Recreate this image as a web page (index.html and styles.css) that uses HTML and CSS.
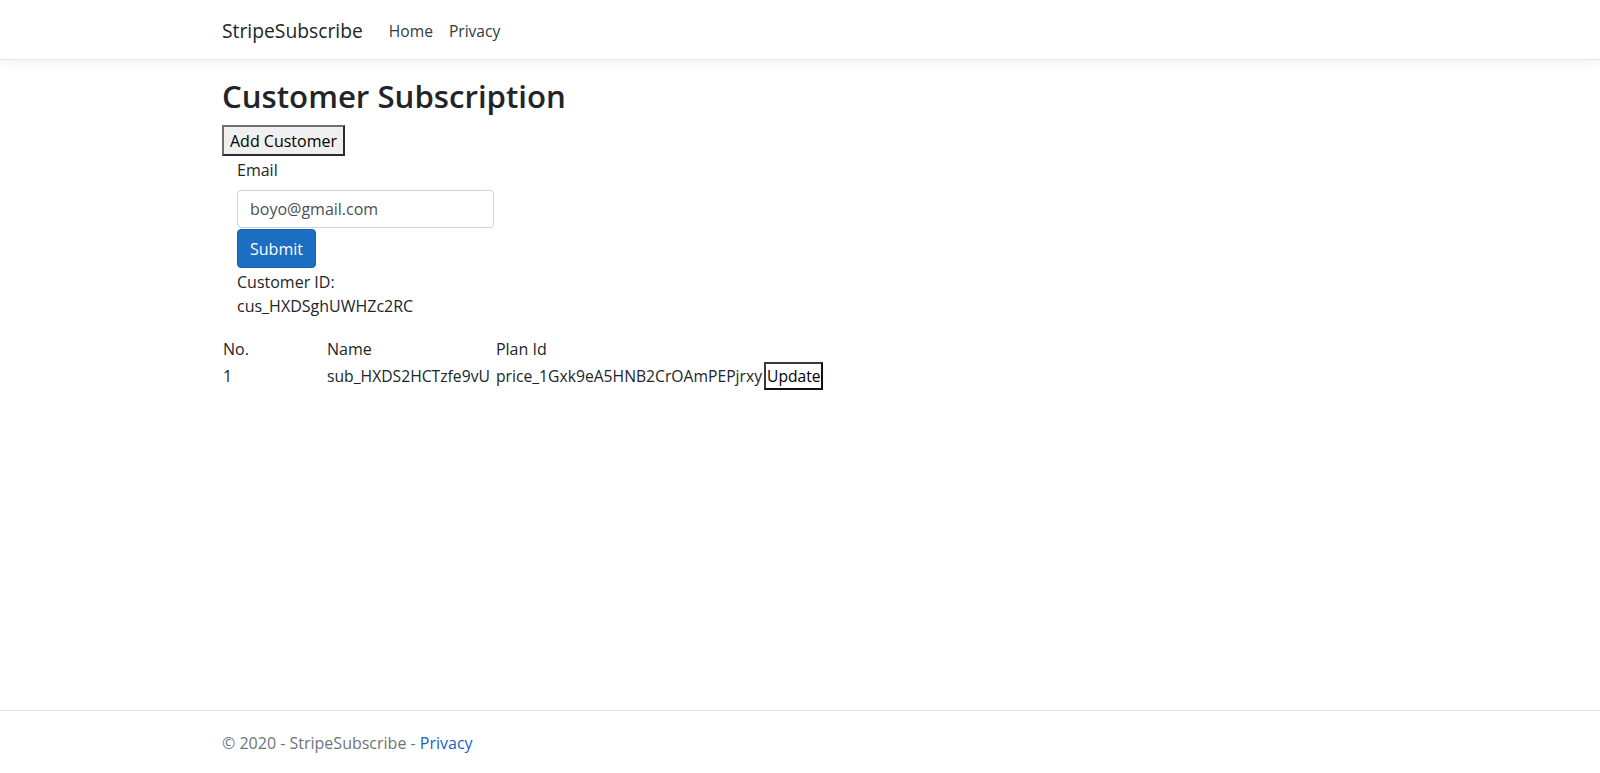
FILE: index.html
```html
<!DOCTYPE html>
<html lang="en">
<head>
<meta charset="utf-8">
<title>Customer Subscription - StripeSubscribe</title>
<link rel="stylesheet" href="styles.css">
</head>
<body>
<header class="site-header">
  <nav class="navbar container">
    <a class="brand" href="#">StripeSubscribe</a>
    <ul class="nav-links">
      <li><a class="nav-link" href="#">Home</a></li>
      <li><a class="nav-link" href="#">Privacy</a></li>
    </ul>
  </nav>
</header>

<main class="container main">
  <h1 class="title">Customer Subscription</h1>
  <button class="btn-plain" type="button">Add Customer</button>
  <div class="col">
    <form class="form">
      <label class="label" for="email">Email</label>
      <input class="form-control" id="email" type="email" value="boyo@gmail.com">
      <button class="btn-primary" type="button">Submit</button>
    </form>
    <div class="customer-label">Customer ID:</div>
    <div class="customer-id">cus_HXDSghUWHZc2RC</div>
  </div>

  <table class="subs">
    <thead>
      <tr>
        <th class="col-no">No.</th>
        <th class="col-name">Name</th>
        <th>Plan Id</th>
        <th></th>
      </tr>
    </thead>
    <tbody>
      <tr>
        <td class="col-no">1</td>
        <td class="col-name cell-id">sub_HXDS2HCTzfe9vU</td>
        <td class="cell-id">price_1Gxk9eA5HNB2CrOAmPEPjrxy</td>
        <td><button class="btn-update" type="button">Update</button></td>
      </tr>
    </tbody>
  </table>
</main>

<footer class="site-footer">
  <div class="container footer-inner">
    &copy; 2020 - StripeSubscribe - <a class="footer-link" href="#">Privacy</a>
  </div>
</footer>
</body>
</html>
```
FILE: styles.css
```css
* { box-sizing: border-box; }

html, body { height: 100%; }

body {
  margin: 0;
  min-height: 100vh;
  display: flex;
  flex-direction: column;
  font-family: "Open Sans", "Noto Sans", sans-serif;
  font-size: 16px;
  line-height: 24px;
  color: #212529;
  background: #fff;
}

.container {
  width: 1156px;
  margin: 0 auto;
}

/* Header */
.site-header {
  background: #fff;
  border-bottom: 1px solid #e5e5e5;
  box-shadow: 0 4px 12px rgba(0, 0, 0, 0.05);
  margin-bottom: 16px;
}

.navbar {
  display: flex;
  align-items: center;
  padding: 11px 0 8px;
}

.brand {
  font-size: 19.3px;
  line-height: 30px;
  padding: 5px 0;
  margin-right: 18px;
  color: #212529;
  text-decoration: none;
}

.nav-links {
  display: flex;
  list-style: none;
  margin: 0;
  padding: 0;
}

.nav-link {
  display: block;
  padding: 8px 8px;
  color: #343a40;
  text-decoration: none;
  font-size: 15.6px;
}

/* Main */
.main {
  flex: 1 0 auto;
}

.title {
  font-size: 31.2px;
  font-weight: 600;
  line-height: 38px;
  margin: 1px 0 10px;
  color: #212529;
}

.btn-plain {
  display: block;
  font-family: inherit;
  font-size: 16px;
  line-height: 24px;
  padding: 2px 6px 1px;
  background: #efefef;
  color: #000;
  border: 2px solid;
  border-color: #6f6f6f #2a2a2a #2a2a2a #6f6f6f;
  border-radius: 0;
}

.col {
  padding: 0 15px;
}

.form {
  display: flex;
  flex-direction: column;
  align-items: flex-start;
}

.label {
  display: block;
  margin: 2px 0 8px;
}

.form-control {
  display: block;
  width: 257px;
  height: 38px;
  padding: 6px 12px;
  font-family: inherit;
  font-size: 16px;
  line-height: 24px;
  color: #495057;
  background: #fff;
  border: 1px solid #ced4da;
  border-radius: 4px;
}

.btn-primary {
  display: block;
  height: 39px;
  padding: 6px 12px;
  font-family: inherit;
  font-size: 16px;
  line-height: 24px;
  color: #fff;
  background: #1b6ec2;
  border: 1px solid #1861ac;
  border-radius: 4px;
  margin-top: 1px;
}

.customer-label {
  margin-top: 2px;
}

/* Table */
.subs {
  border-collapse: collapse;
  margin-top: 18px;
}

.subs th,
.subs td {
  padding: 1px;
  text-align: left;
  font-weight: 400;
  white-space: nowrap;
  vertical-align: middle;
}

.subs thead th {
  padding-bottom: 0;
}

.subs .col-no {
  width: 104px;
}

.subs .col-name {
  padding-right: 5px;
}

.subs .cell-id {
  font-size: 15.7px;
}

.btn-update {
  display: block;
  font-family: inherit;
  font-size: 15.6px;
  line-height: 24px;
  padding: 0 1px;
  background: #fff;
  color: #000;
  border: 2px solid;
  border-color: #3a3a3a #111 #111 #3a3a3a;
  border-radius: 0;
}

/* Footer */
.site-footer {
  border-top: 1px solid #e5e5e5;
  padding-top: 2px;
  line-height: 60px;
  height: 63px;
  color: #6c757d;
  white-space: nowrap;
}

.footer-inner {
  font-size: 16px;
}

.footer-link {
  color: #1b5fc2;
  text-decoration: none;
}
```
